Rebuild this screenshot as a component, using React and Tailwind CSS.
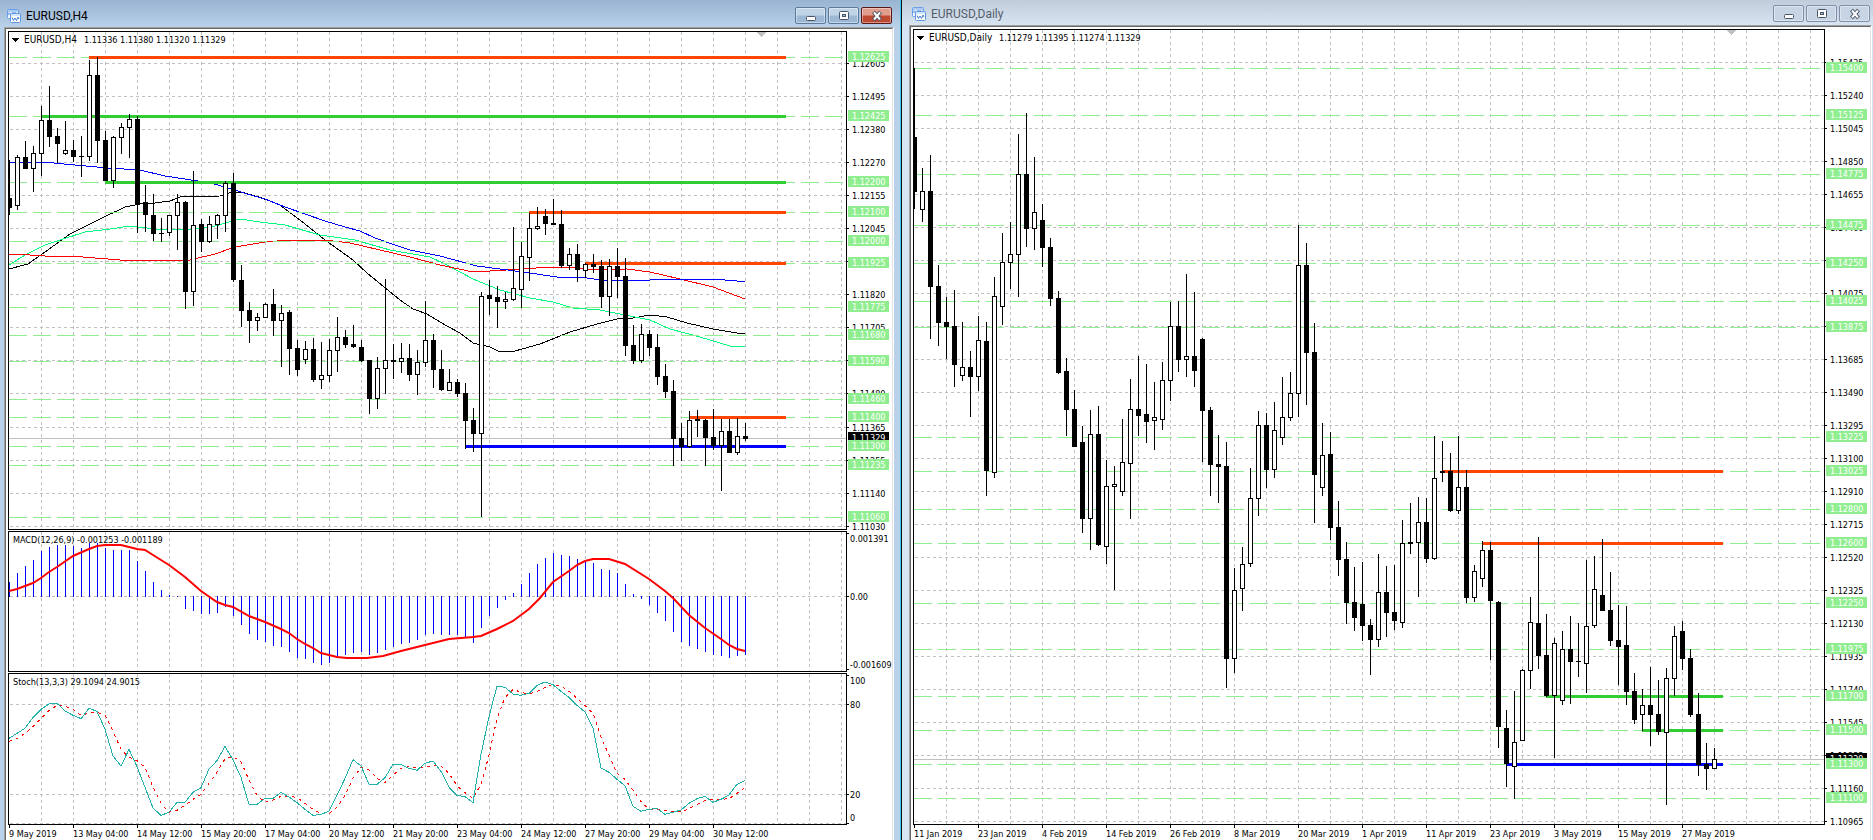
import React from 'react';
import { clsx } from 'clsx';
import { twMerge } from 'tailwind-merge';

const classNames = (...inputs) => twMerge(clsx(inputs));

const STEP = 8;
const chartText = "text-[9px] font-['DejaVu_Sans_Condensed','Noto_Sans',sans-serif]";

// [high, body top, body bottom, low, bullish]
const h4Candles = [
  [160, 198, 208, 215, 0], [155, 157, 206, 210, 1], [141, 157, 169, 169, 0], [146, 153, 169, 192, 1],
  [106, 120, 154, 176, 1], [86, 120, 137, 147, 0], [128, 136, 144, 163, 0], [121, 150, 154, 155, 1],
  [140, 150, 157, 162, 0], [136, 156, 157, 177, 0], [60, 75, 157, 161, 1], [57, 75, 141, 163, 0],
  [131, 140, 181, 181, 0], [136, 137, 181, 188, 1], [123, 127, 138, 154, 1], [114, 119, 128, 158, 1],
  [116, 119, 204, 233, 0], [185, 202, 215, 232, 0], [194, 215, 234, 241, 0], [218, 233, 234, 242, 0],
  [215, 215, 233, 236, 1], [194, 202, 216, 250, 1], [201, 202, 292, 309, 0], [171, 225, 292, 306, 1],
  [219, 224, 242, 252, 0], [216, 224, 242, 243, 1], [214, 215, 225, 239, 1], [181, 183, 216, 232, 1],
  [173, 183, 280, 282, 0], [265, 280, 311, 327, 0], [302, 310, 321, 343, 0], [313, 317, 321, 331, 1],
  [303, 304, 318, 318, 1], [289, 304, 321, 336, 0], [305, 313, 321, 367, 1], [310, 312, 349, 375, 0],
  [340, 348, 370, 376, 0], [341, 349, 360, 364, 1], [338, 349, 380, 382, 0], [342, 375, 380, 389, 1],
  [339, 350, 376, 382, 1], [317, 337, 351, 372, 1], [330, 337, 345, 348, 0], [325, 344, 347, 348, 0],
  [340, 347, 361, 362, 0], [360, 360, 399, 414, 0], [357, 368, 399, 409, 1], [279, 360, 369, 394, 1],
  [344, 360, 362, 379, 0], [343, 358, 362, 373, 1], [344, 358, 375, 381, 0], [350, 362, 375, 395, 1],
  [301, 340, 363, 367, 1], [334, 340, 370, 388, 0], [350, 369, 390, 391, 0], [369, 382, 391, 391, 1],
  [379, 382, 394, 397, 0], [383, 393, 421, 449, 0], [408, 420, 434, 452, 0], [292, 296, 434, 517, 1],
  [280, 295, 299, 315, 0], [286, 297, 302, 328, 0], [292, 299, 302, 309, 1], [227, 288, 300, 301, 1],
  [242, 256, 290, 308, 1], [213, 228, 258, 281, 1], [207, 226, 229, 230, 1], [209, 216, 224, 235, 0],
  [199, 223, 225, 225, 0], [210, 224, 266, 268, 0], [248, 254, 266, 270, 1], [244, 254, 270, 282, 0],
  [263, 264, 271, 278, 1], [254, 264, 267, 273, 0], [260, 266, 297, 308, 0], [259, 266, 297, 316, 1],
  [248, 266, 277, 298, 0], [258, 276, 346, 356, 0], [325, 345, 361, 364, 0], [324, 334, 361, 363, 1],
  [330, 334, 348, 356, 0], [334, 347, 377, 385, 0], [364, 376, 392, 398, 0], [380, 391, 439, 466, 0],
  [423, 438, 447, 461, 0], [411, 420, 447, 448, 1], [410, 419, 421, 437, 0], [419, 420, 438, 466, 0],
  [409, 437, 446, 450, 0], [419, 431, 446, 491, 1], [419, 431, 453, 453, 0], [418, 436, 453, 455, 1],
  [423, 436, 439, 441, 0],
];

const dailyCandles = [
  [68, 137, 192, 209, 0], [168, 191, 210, 222, 1], [155, 191, 287, 339, 0], [265, 286, 323, 346, 0],
  [297, 322, 327, 359, 0], [290, 326, 365, 387, 0], [322, 367, 376, 381, 1], [351, 367, 377, 417, 0],
  [316, 340, 377, 391, 1], [322, 341, 471, 496, 0], [277, 296, 473, 478, 1], [233, 262, 307, 325, 1],
  [222, 254, 263, 289, 1], [134, 174, 255, 297, 1], [113, 174, 229, 247, 0], [157, 212, 229, 250, 1],
  [204, 220, 248, 267, 0], [238, 247, 299, 306, 0], [291, 298, 373, 374, 0], [358, 371, 410, 436, 0],
  [390, 409, 447, 447, 0], [426, 442, 519, 533, 0], [410, 434, 519, 550, 1], [406, 434, 545, 546, 0],
  [460, 486, 547, 564, 1], [466, 484, 487, 590, 1], [419, 462, 492, 496, 1], [379, 409, 464, 519, 1],
  [356, 409, 416, 436, 0], [364, 414, 422, 443, 0], [382, 417, 421, 450, 1], [362, 380, 420, 430, 1],
  [302, 326, 381, 401, 1], [301, 326, 360, 372, 0], [274, 356, 360, 377, 1], [292, 356, 371, 387, 0],
  [338, 339, 411, 462, 0], [407, 410, 465, 496, 0], [435, 464, 467, 503, 0], [442, 466, 659, 688, 0],
  [568, 590, 659, 673, 1], [547, 564, 589, 611, 1], [468, 498, 564, 567, 1], [411, 425, 499, 516, 1],
  [413, 425, 470, 488, 0], [402, 430, 470, 478, 1], [377, 417, 438, 445, 1], [372, 393, 418, 421, 1],
  [225, 265, 394, 417, 1], [243, 265, 353, 405, 0], [323, 352, 475, 523, 0], [423, 455, 488, 496, 1],
  [432, 454, 528, 540, 0], [501, 527, 560, 576, 0], [542, 559, 603, 624, 0], [567, 602, 618, 631, 0],
  [562, 604, 626, 641, 0], [619, 625, 640, 675, 0], [554, 592, 640, 647, 1], [566, 592, 613, 637, 0],
  [565, 612, 621, 630, 0], [520, 543, 623, 628, 1], [503, 542, 544, 554, 0], [497, 522, 543, 597, 1],
  [498, 522, 559, 563, 0], [436, 478, 559, 560, 1], [441, 471, 473, 482, 0], [453, 471, 511, 512, 0],
  [436, 487, 511, 514, 1], [470, 487, 598, 603, 0], [565, 571, 598, 602, 1], [541, 550, 579, 587, 1],
  [542, 550, 601, 660, 0], [601, 602, 727, 748, 0], [710, 728, 764, 787, 0], [691, 742, 767, 799, 1],
  [669, 670, 741, 741, 1], [597, 622, 671, 689, 1], [537, 623, 656, 669, 0], [614, 655, 696, 697, 0],
  [638, 643, 696, 758, 1], [631, 649, 701, 705, 1], [616, 649, 662, 704, 0], [623, 661, 662, 677, 0],
  [560, 626, 664, 693, 1], [556, 589, 626, 628, 1], [539, 595, 611, 611, 0], [572, 610, 641, 646, 0],
  [605, 640, 647, 685, 0], [606, 645, 692, 705, 0], [673, 691, 720, 724, 0], [689, 705, 715, 731, 1],
  [667, 705, 715, 746, 0], [680, 714, 732, 735, 0], [668, 678, 733, 805, 1], [626, 636, 679, 696, 1],
  [621, 631, 659, 670, 0], [649, 658, 715, 717, 0], [693, 714, 765, 776, 0], [743, 764, 769, 790, 0],
  [748, 759, 769, 769, 1],
];

// rows without a text sit right under a level tag, which hides their price
const h4Grid = [
  [63, '1.12605'], [96, '1.12495'], [129, '1.12380'], [162, '1.12270'], [195, '1.12155'],
  [228, '1.12045'], [261], [294, '1.11820'], [327, '1.11705'], [360],
  [393, '1.11480'], [427, '1.11365'], [460, '1.11255'], [493, '1.11140'], [526, '1.11030'],
];

const dailyGrid = [
  [62, '1.15435'], [95, '1.15240'], [128, '1.15045'], [161, '1.14850'], [194, '1.14655'],
  [227, '1.14460'], [260], [293, '1.14075'], [326], [359, '1.13685'],
  [392, '1.13490'], [425, '1.13295'], [458, '1.13100'], [491, '1.12910'], [524, '1.12715'],
  [557, '1.12520'], [590, '1.12325'], [623, '1.12130'], [656, '1.11935'], [689, '1.11740'],
  [722, '1.11545'], [755, '1.11355'], [788, '1.11160'], [821, '1.10965'],
];

const h4Levels = [
  [57, '1.12625'], [116, '1.12425'], [182, '1.12200'], [212, '1.12100'], [241, '1.12000'],
  [263, '1.11925'], [307, '1.11775'], [335, '1.11680'], [361, '1.11590'], [399, '1.11460'],
  [417, '1.11400'], [446, '1.11300'], [465, '1.11235'], [517, '1.11060'],
];

const dailyLevels = [
  [68, '1.15400'], [115, '1.15125'], [174, '1.14775'], [225, '1.14475'], [263, '1.14250'],
  [301, '1.14025'], [327, '1.13875'], [437, '1.13225'], [471, '1.13025'], [509, '1.12800'],
  [543, '1.12600'], [603, '1.12250'], [649, '1.11975'], [696, '1.11700'], [730, '1.11500'],
  [764, '1.11300'], [798, '1.11100'],
];

// [x1, x2, y, color]
const h4Zones = [
  [89, 786, 57, '#ff4500'], [41, 786, 116, '#32cd32'], [105, 786, 182, '#32cd32'],
  [529, 786, 212, '#ff4500'], [585, 786, 263, '#ff4500'], [689, 786, 417, '#ff4500'],
  [465, 786, 446, '#0000ff'],
];

const dailyZones = [
  [1442, 1723, 471, '#ff4500'], [1482, 1723, 543, '#ff4500'], [1546, 1723, 696, '#32cd32'],
  [1642, 1723, 730, '#32cd32'], [1506, 1723, 764, '#0000ff'],
];

const averages = [
  ['#000000', '9,269 28,264 45,252 70,234 100,219 125,207 140,204 155,203 170,201 180,197 220,196 232,192 245,193 262,198 280,205 300,220 325,240 353,260 367,273 400,300 413,309 427,314 445,325 460,333 473,343 490,347 498,351 515,351 540,344 570,332 597,324 617,319 633,318 650,315 667,317 687,323 713,329 737,333 745,333'],
  ['#00fa7f', '9,265 25,255 45,245 60,240 85,232 110,229 130,226 155,229 190,230 215,226 240,219 260,222 285,225 320,235 355,240 390,250 430,257 445,264 473,279 500,290 530,298 553,302 573,308 600,310 625,315 650,320 670,329 700,337 730,346 745,347'],
  ['#ff0000', '9,254 30,255 45,256 70,256 95,258 120,260 150,260 175,261 190,260 215,254 235,247 265,242 290,240 325,240 350,243 380,250 410,257 440,265 473,272 523,269 550,267 570,267 590,270 627,269 650,272 680,279 713,287 745,299'],
  ['#0000ff', '9,162 43,162 75,165 108,168 140,170 165,176 198,181 214,184 232,189 247,194 265,199 285,207 305,214 325,221 345,227 360,231 375,238 392,244 410,250 440,256 477,266 523,272 557,277 587,278 600,280 637,281 663,279 713,279 737,281 745,281'],
];

const macdBars = [
  582, 573, 566, 560, 551, 547, 545, 545, 546, 548, 543, 543, 548, 550, 550, 550, 561, 571, 582, 590,
  595, 596, 608, 610, 613, 613, 612, 606, 615, 624, 633, 639, 641, 645, 646, 651, 657, 658, 662, 664,
  662, 656, 654, 652, 651, 654, 652, 649, 646, 643, 642, 639, 634, 633, 634, 634, 634, 636, 642, 627,
  615, 607, 599, 593, 584, 573, 564, 558, 553, 555, 556, 559, 561, 563, 569, 570, 573, 584, 594, 598,
  604, 612, 620, 631, 641, 645, 648, 651, 654, 655, 657, 655, 654,
];

const macdSignal = '9,591 17,589 25,586 33,583 41,578 49,572 57,567 73,556 89,549 97,546 105,545 121,545 137,549 145,550 153,555 161,560 169,565 185,577 201,591 217,602 225,605 233,607 249,616 265,622 281,629 289,633 297,639 305,644 313,648 321,653 337,657 347,658 367,658 383,656 401,651 425,645 449,639 473,637 481,636 497,629 513,621 521,615 529,609 540,598 553,582 569,571 577,565 585,561 593,559 609,559 625,564 649,579 665,591 673,598 689,615 705,628 721,639 729,645 737,649 745,651';

// thirds of a pixel below y = 520
const stochMain = [
  655, 640, 625, 592, 568, 552, 550, 573, 586, 596, 565, 574, 628, 708, 738, 688, 740, 802, 864, 886,
  877, 847, 847, 817, 803, 747, 722, 679, 720, 772, 853, 853, 835, 835, 817, 831, 848, 868, 886, 883,
  874, 826, 775, 719, 738, 793, 793, 773, 733, 733, 745, 751, 730, 723, 754, 802, 826, 830, 848, 703,
  590, 498, 502, 522, 526, 520, 496, 486, 494, 514, 532, 556, 576, 625, 744, 757, 778, 797, 859, 874,
  868, 865, 883, 877, 870, 850, 836, 829, 847, 838, 825, 793, 781,
];

const stochSignal = [
  664, 656, 640, 620, 596, 572, 556, 559, 568, 586, 579, 577, 586, 634, 688, 712, 722, 742, 802, 850,
  877, 871, 856, 838, 823, 790, 757, 716, 710, 725, 780, 826, 847, 840, 829, 829, 832, 850, 868, 880,
  881, 862, 826, 775, 742, 750, 775, 787, 766, 745, 740, 744, 742, 736, 738, 760, 797, 818, 835, 793,
  706, 595, 532, 508, 517, 522, 514, 502, 493, 499, 514, 535, 556, 580, 652, 706, 760, 778, 810, 844,
  868, 868, 872, 875, 876, 866, 853, 841, 838, 838, 836, 820, 802,
];

const h4Times = [
  '9 May 2019', '13 May 04:00', '14 May 12:00', '15 May 20:00', '17 May 04:00', '20 May 12:00',
  '21 May 20:00', '23 May 04:00', '24 May 12:00', '27 May 20:00', '29 May 04:00', '30 May 12:00',
].map((label, i) => [9 + i * 64, label]);

const dailyTimes = [
  '11 Jan 2019', '23 Jan 2019', '4 Feb 2019', '14 Feb 2019', '26 Feb 2019', '8 Mar 2019', '20 Mar 2019',
  '1 Apr 2019', '11 Apr 2019', '23 Apr 2019', '3 May 2019', '15 May 2019', '27 May 2019',
].map((label, i) => [914 + i * 64, label]);

const stochPoints = (values) => values.map((v, i) => `${9 + i * STEP},${520 + v / 3}`).join(' ');

const Grid = ({ x, y, height, first, rows }) =>
  <g stroke="#c0c0c0" strokeDasharray="3 3">
    {Array.from({ length: 40 }, (_, i) => first + i * 32 + 0.5).map((gx) => (
      <line key={gx} x1={gx} x2={gx} y1={y} y2={y + height} />
    ))}
    {rows.map((r) => <line key={r} x1={x + 1} x2={x + 3000} y1={r + 0.5} y2={r + 0.5} />)}
  </g>

const Candles = ({ data, first }) =>
  <g>
    {data.map(([high, top, bottom, low, up], i) => {
      const cx = first + i * STEP;
      return (
        <g key={i}>
          <rect x={cx} y={high} width="1" height={low - high} />
          <rect x={cx - 2} y={top} width="5" height={bottom - top} />
          {up === 1 && <rect x={cx - 1} y={top + 1} width="3" height={bottom - top - 2} fill="#fff" />}
        </g>
      );
    })}
  </g>

const Levels = ({ x, levels, zones }) =>
  <g>
    {levels.map(([y]) => (
      <line key={y} x1={x} x2={x + 3000} y1={y + 0.5} y2={y + 0.5} stroke="#90ee90" strokeDasharray="18 6" />
    ))}
    {zones.map(([x1, x2, y, color]) => (
      <rect key={y} x={x1} y={y - 1} width={x2 - x1} height="3" fill={color} />
    ))}
  </g>

// One framed plot with its scale to the right; x and y are the chart coordinates of the plot corner.
const Pane = ({ x, y, label, heightClass, axisX, axis, children }) =>
  <div className={classNames("flex", heightClass)}>
    <div className="flex-1 min-w-0 border border-black overflow-hidden">
      <svg className={classNames("block w-full h-full", chartText)} shapeRendering="crispEdges" role="img" aria-label={label}>
        <g transform={`translate(${-x - 1} ${-y - 1})`}>{children}</g>
      </svg>
    </div>
    <svg className={classNames("block shrink-0 w-[45px] h-full overflow-visible", chartText)} shapeRendering="crispEdges">
      <g transform={`translate(${-axisX} ${-y})`}>{axis}</g>
    </svg>
  </div>

const PriceAxis = ({ x, grid, levels, price }) =>
  <g>
    {grid.map(([y, text]) => (
      <g key={y}>
        <rect x={x} y={y} width="2" height="1" />
        {text && <text x={x + 5} y={y + 4}>{text}</text>}
      </g>
    ))}
    <rect x={x + 1} y={price - 6} width="41" height="11" />
    <text x={x + 5} y={price + 3} fill="#fff">1.11329</text>
    {levels.map(([y, text]) => (
      <g key={text}>
        <rect x={x + 1} y={y - 6} width="41" height="11" fill="#90ee90" />
        <text x={x + 5} y={y + 3} fill="#fff">{text}</text>
      </g>
    ))}
  </g>

const ScaleAxis = ({ x, marks }) =>
  <g>
    {marks.map(([y, text, tick]) => (
      <g key={text}>
        <rect x={x} y={tick} width="2" height="1" />
        <text x={x + 3} y={y + 4}>{text}</text>
      </g>
    ))}
  </g>

const TimeAxis = ({ x, times }) =>
  <svg className={classNames("block w-full h-[15px] overflow-hidden", chartText)} shapeRendering="crispEdges">
    <g transform={`translate(${-x} 0)`}>
      {times.map(([tx, text]) => (
        <g key={text}>
          <rect x={tx} y="0" width="1" height="3" />
          <text x={tx} y="12">{text}</text>
        </g>
      ))}
    </g>
  </svg>

const Quote = ({ x, y, symbol, valuesX, values }) =>
  <g>
    <path d={`M${x} ${y - 1}h7l-3.5 4z`} />
    <text x={x + 12} y={y + 4} className="text-[10px]">{symbol}</text>
    <text x={valuesX} y={y + 4}>{values}</text>
  </g>

const ChartIcon = () =>
  <svg width="14" height="14" viewBox="0 0 14 14" aria-hidden="true">
    <rect x="0.5" y="0.5" width="11" height="9" rx="1" fill="#eef5ff" stroke="#6aa0e8" />
    <path d="M0 2h12" stroke="#6aa0e8" />
    <path d="M2 6V3.500M4 5.500V4M6 4.500V3M8 4V3" stroke="#3f7fd8" />
    <rect x="3.500" y="4.500" width="10" height="9" rx="1" fill="#fff" stroke="#5b95e4" />
    <path d="M4 6h9" stroke="#a9c9f4" />
    <path d="M5 8.500l1.500 3L8 9l1.500 2.500L11 8l1 2" fill="none" stroke="#3f7fd8" />
  </svg>

const glyphs = {
  Minimize: <rect x="1.500" y="6.500" width="9" height="4" rx="1" fill="#fff" stroke="#4a5568" />,
  Maximize: <g stroke="#4a5568" fill="#fff"><rect x="1.500" y="1.500" width="9" height="8" rx="1" /><rect x="4.500" y="4.500" width="3" height="2" fill="#a9bdd4" /></g>,
  Close: <g><path d="M2.500 2l7 8M9.500 2l-7 8" stroke="#4a5568" strokeWidth="4" /><path d="M3 2.500l6 7M9 2.500l-6 7" stroke="#fff" strokeWidth="2" /></g>,
};

const WindowButton = ({ name, className }) =>
  <button
    type="button"
    aria-label={name}
    className={classNames("w-[31px] h-[17px] rounded-xs border flex items-center justify-center shadow-[inset_0_0_0_1px_rgba(255,255,255,0.4)]", className)}
  >
    <svg width="12" height="12" viewBox="0 0 12 12">{glyphs[name]}</svg>
  </button>

const ChartWindow = ({ title, active, children }) => {
  const button = active
    ? "border-[#5c7a9c] bg-linear-to-b from-[#c0d4e8] from-45% to-[#9cb8d4] to-55%"
    : "border-[#7e8eab] bg-[#c6d4e3]";

  return (
    <section className={classNames("min-w-0 flex flex-col", active ? "bg-[#b9d1ea] border-r border-[#101418] shadow-[inset_-1px_0_0_#35c8f0]" : "bg-[#d7e4f2]")}>
      <header className={classNames(
        "flex items-center bg-linear-to-b",
        active ? "h-[27px] pt-1 pl-[7px] pr-2 mr-px from-[#99b4d1] to-[#b9d1ea]" : "h-[25px] pt-0.5 pl-[10px] pr-[3px] from-[#c0ccda] to-[#d7e4f2]"
      )}>
        <ChartIcon />
        <h2 className={classNames("ml-[5px] flex-1 text-xs font-['Roboto',sans-serif]", active ? "text-black" : "text-[#565e6a]")}>{title}</h2>
        <div className="flex gap-0.5">
          <WindowButton name="Minimize" className={button} />
          <WindowButton name="Maximize" className={button} />
          <WindowButton name="Close" className={active ? "border-[#5a1a1a] bg-linear-to-b from-[#e09c8c] from-45% to-[#bf4a32] to-55%" : button} />
        </div>
      </header>
      <div className={classNames("flex-1 border-t border-l border-r border-t-[#a0a0a0] border-l-[#a0a0a0] border-r-white", active ? "ml-1 mr-[7px]" : "ml-[7px] mr-px")}>
        <div className="h-full bg-white border-t border-l border-r border-t-[#696969] border-l-[#696969] border-r-[#e3e3e3] pt-0.5 pl-0.5">
          {children}
        </div>
      </div>
    </section>
  );
};

const H4Window = () =>
  <ChartWindow title="EURUSD,H4" active>
    <div className="flex flex-col gap-px">
      <Pane
        x={8} y={31} axisX={847} heightClass="h-[499px]" label="EURUSD H4 price"
        axis={<PriceAxis x={847} grid={h4Grid} levels={h4Levels} price={438} />}
      >
        <Grid x={9} y={32} height={497} first={41} rows={h4Grid.map(([y]) => y)} />
        <rect x="9" y="438" width="3000" height="1" fill="#c0c0c0" />
        {averages.map(([color, points]) => (
          <polyline key={color} points={points} fill="none" stroke={color} />
        ))}
        <Levels x={9} levels={h4Levels} zones={h4Zones} />
        <Candles data={h4Candles} first={9} />
        <path d="M756 32h10l-5 5z" fill="#c0c0c0" />
        <Quote x={12} y={39} symbol="EURUSD,H4" valuesX={84} values="1.11336 1.11380 1.11320 1.11329" />
      </Pane>
      <Pane
        x={8} y={531} axisX={847} heightClass="h-[141px]" label="MACD"
        axis={<ScaleAxis x={847} marks={[[538, '0.001391', 533], [596, '0.00', 596], [664, '-0.001609', 669]]} />}
      >
        <Grid x={9} y={532} height={140} first={41} rows={[596]} />
        {macdBars.map((v, i) => (
          <rect key={i} x={9 + i * STEP} y={Math.min(v, 596)} width="1" height={Math.abs(v - 596) + 1} fill="#0000ff" />
        ))}
        <polyline points={macdSignal} fill="none" stroke="#ff0000" strokeWidth="2" shapeRendering="auto" />
        <text x="13" y="543">MACD(12,26,9) -0.001253 -0.001189</text>
      </Pane>
      <Pane
        x={8} y={673} axisX={847} heightClass="h-[152px]" label="Stochastic"
        axis={<ScaleAxis x={847} marks={[[680, '100', 675], [704, '80', 704], [794, '20', 794], [817, '0', 823]]} />}
      >
        <Grid x={9} y={674} height={150} first={41} rows={[704, 794, 823]} />
        <polyline points={stochPoints(stochSignal)} fill="none" stroke="#ff0000" strokeDasharray="3 4" />
        <polyline points={stochPoints(stochMain)} fill="none" stroke="#20b2aa" />
        <text x="13" y="685">Stoch(13,3,3) 29.1094 24.9015</text>
      </Pane>
    </div>
    <TimeAxis x={8} times={h4Times} />
  </ChartWindow>

const DailyWindow = () =>
  <ChartWindow title="EURUSD,Daily">
    <Pane
      x={913} y={29} axisX={1825} heightClass="h-[796px]" label="EURUSD Daily price"
      axis={<PriceAxis x={1825} grid={dailyGrid} levels={dailyLevels} price={759} />}
    >
      <Grid x={914} y={30} height={795} first={946} rows={dailyGrid.map(([y]) => y)} />
      <rect x="914" y="759" width="3000" height="1" fill="#c0c0c0" />
      <Levels x={914} levels={dailyLevels} zones={dailyZones} />
      <Candles data={dailyCandles} first={914} />
      <path d="M1726 30h10l-5 5z" fill="#c0c0c0" />
      <Quote x={917} y={37} symbol="EURUSD,Daily" valuesX={999} values="1.11279 1.11395 1.11274 1.11329" />
    </Pane>
    <TimeAxis x={913} times={dailyTimes} />
  </ChartWindow>

export default function App() {
  return (
    <main className="min-h-screen grid grid-cols-[902fr_971fr] overflow-hidden bg-[#b9d1ea]">
      <H4Window />
      <DailyWindow />
    </main>
  );
}
